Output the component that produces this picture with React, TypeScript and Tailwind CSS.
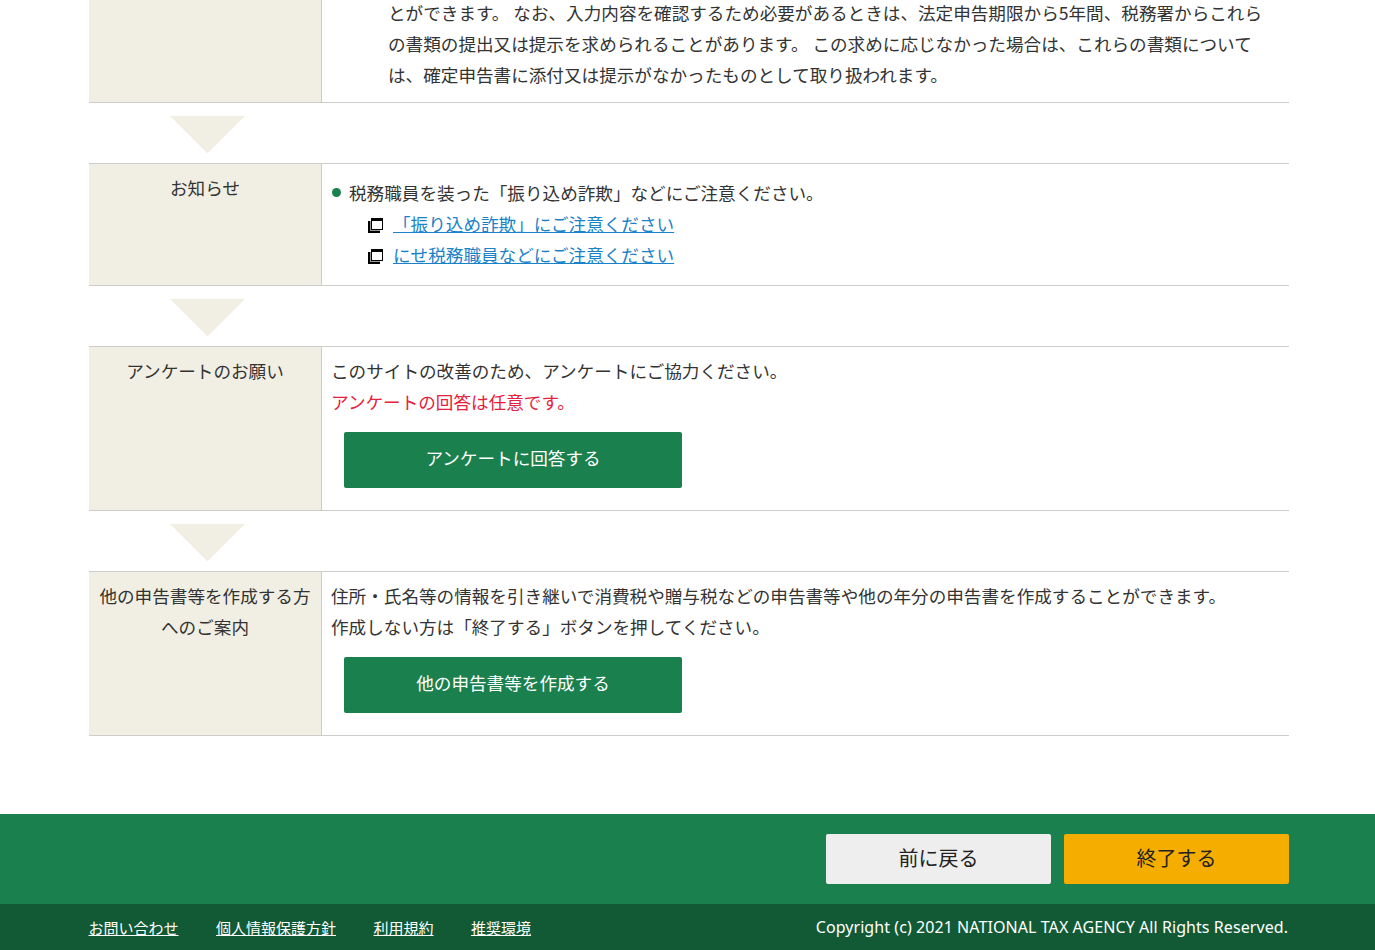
const FONT = "font-['Noto_Sans_CJK_JP','Noto_Sans',sans-serif]";

function Arrow() {
  return (
    <div className="h-[60px] pt-[13px] pl-[81px]">
      <svg width="75" height="38" viewBox="0 0 75 38" className="block">
        <polygon points="0,0 75,0 37.5,37.5" fill="#f1efe4" />
      </svg>
    </div>
  );
}

function Row({ label, children, top }: { label: React.ReactNode; children: React.ReactNode; top?: boolean }) {
  return (
    <div className={`flex border-b border-[#cccccc] ${top ? "" : "border-t"}`}>
      <div className="w-[233px] shrink-0 bg-[#f1efe4] border-r border-[#cccccc] px-[10px] py-[8px] text-center">
        {label}
      </div>
      <div className="flex-1 pl-[9px] pt-[8px] pb-[22px]">{children}</div>
    </div>
  );
}

function PopupIcon() {
  return (
    <svg width="15" height="15" viewBox="0 0 15 15" className="shrink-0 mt-[4px]">
      <path d="M0 3h2v10h10v2H0z" fill="#000" />
      <path d="M2 3h1v9h9v1H2z" fill="#999" />
      <rect x="3.5" y="0.5" width="11" height="11" fill="#fff" stroke="#000" />
      <rect x="3" y="0" width="12" height="3" fill="#000" />
    </svg>
  );
}

function PopupLink({ children }: { children: React.ReactNode }) {
  return (
    <div className="flex items-center pl-[36px] h-[31px]">
      <PopupIcon />
      <a href="#" className="ml-[10px] text-[#1a82c8] underline">{children}</a>
    </div>
  );
}

function GreenButton({ children }: { children: React.ReactNode }) {
  return (
    <button className="ml-[13px] mt-[15px] pb-[5px] block w-[338px] h-[56px] rounded-[2px] bg-[#1a804e] text-white text-[17.6px]">
      {children}
    </button>
  );
}

export default function App() {
  return (
    <div className={`${FONT} h-[950px] overflow-hidden bg-white text-[17.6px] leading-[31px] text-[#333333] flex flex-col`}>
      <main className="w-[1200px] ml-[89px] -mt-[3px] flex-1">
        <Row top label="">
          <p className="pl-[57px] -mt-[8px] whitespace-nowrap -mb-[10px]">
            とができます。 なお、入力内容を確認するため必要があるときは、法定申告期限から5年間、税務署からこれら<br />
            の書類の提出又は提示を求められることがあります。 この求めに応じなかった場合は、これらの書類について<br />
            は、確定申告書に添付又は提示がなかったものとして取り扱われます。
          </p>
        </Row>
        <Arrow />
        <Row label="お知らせ">
          <div className="-mb-[7px] pt-[5px] pl-[1px]">
            <div className="flex items-center">
              <span className="w-[9px] h-[9px] rounded-full bg-[#1a804e] mr-[8px]" />
              税務職員を装った「振り込め詐欺」などにご注意ください。
            </div>
            <PopupLink>「振り込め詐欺」にご注意ください</PopupLink>
            <PopupLink>にせ税務職員などにご注意ください</PopupLink>
          </div>
        </Row>
        <Arrow />
        <Row label="アンケートのお願い">
          <p>このサイトの改善のため、アンケートにご協力ください。</p>
          <p className="text-[#e6213c]">アンケートの回答は任意です。</p>
          <GreenButton>アンケートに回答する</GreenButton>
        </Row>
        <Arrow />
        <Row label="他の申告書等を作成する方へのご案内">
          <p>住所・氏名等の情報を引き継いで消費税や贈与税などの申告書等や他の年分の申告書を作成することができます。</p>
          <p>作成しない方は「終了する」ボタンを押してください。</p>
          <GreenButton>他の申告書等を作成する</GreenButton>
        </Row>
      </main>
      <footer className="shrink-0">
        <div className="h-[90px] bg-[#1a804e] flex justify-end items-center gap-[13px] pr-[86px]">
          <button className="w-[225px] h-[50px] pb-[4px] rounded-[2px] bg-[#eeeeee] text-[20px] text-[#222222]">前に戻る</button>
          <button className="w-[225px] h-[50px] pb-[4px] rounded-[2px] bg-[#f5ae00] text-[20px] text-[#222222]">終了する</button>
        </div>
        <div className="h-[46px] bg-[#125a36] flex items-center justify-between pl-[88.5px] pr-[87px] text-white text-[15px]">
          <nav className="flex gap-[37.5px]">
            <a href="#" className="underline">お問い合わせ</a>
            <a href="#" className="underline">個人情報保護方針</a>
            <a href="#" className="underline">利用規約</a>
            <a href="#" className="underline">推奨環境</a>
          </nav>
          <span className="font-['Noto_Sans',sans-serif] text-[16px] tracking-[0.07px]">Copyright (c) 2021 NATIONAL TAX AGENCY All Rights Reserved.</span>
        </div>
      </footer>
    </div>
  );
}
